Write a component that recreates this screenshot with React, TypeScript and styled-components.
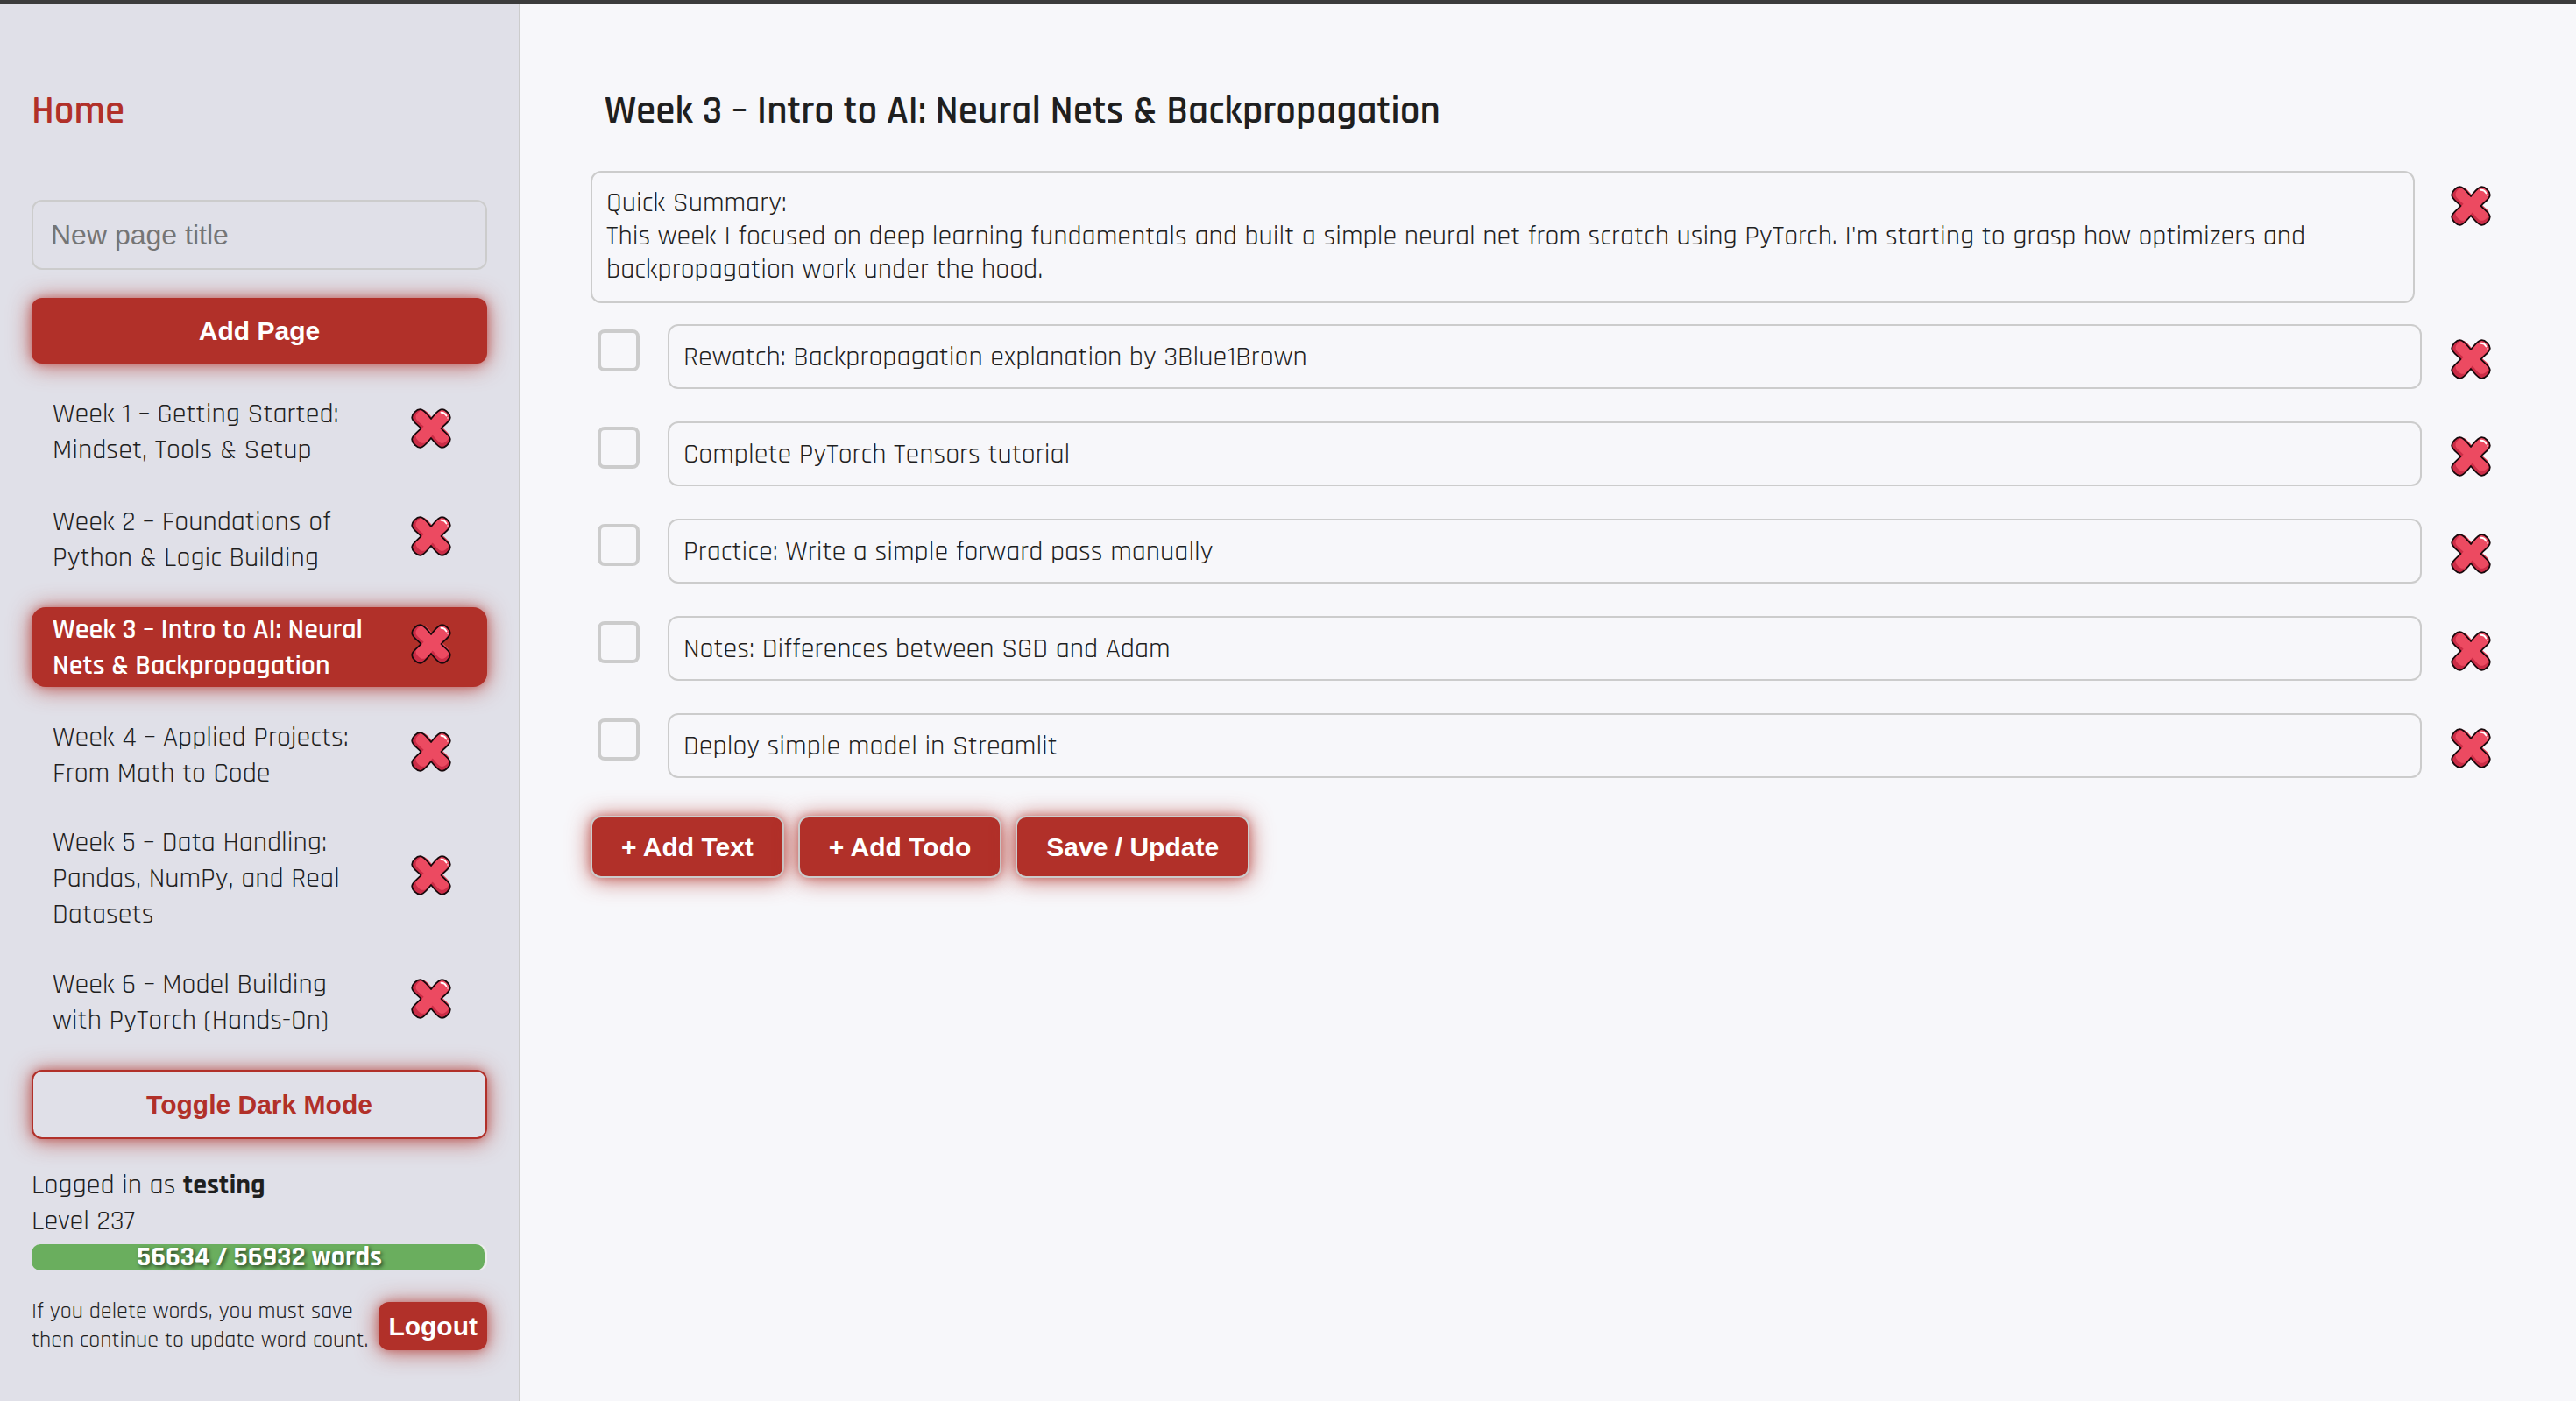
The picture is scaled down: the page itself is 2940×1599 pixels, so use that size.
import React, { useState } from "react";
import styled, { createGlobalStyle, css } from "styled-components";

const color = {
  red: "#b13029",
  text: "#1f1f1f",
  border: "#cccccc",
  side: "#e0e0e8",
  page: "#f7f7fa",
  green: "#6aae5e",
};

const glow = "0 0 10px rgba(178, 48, 40, 0.4), 0 2px 26px rgba(178, 48, 40, 0.75)";
const uiFont = `"Liberation Sans", Arial, sans-serif`;

const GlobalStyle = createGlobalStyle`
  *, *::before, *::after { box-sizing: border-box; }
  body {
    margin: 0;
    background: ${color.page};
    color: ${color.text};
    font-family: Rajdhani, "Roboto Condensed", Roboto, sans-serif;
    font-size: 32px;
    line-height: 41px;
  }
`;

const Shell = styled.div`
  display: grid;
  grid-template-columns: 594px minmax(0, 1fr);
  min-height: 100vh;
  border-top: 5px solid #3c3c3c;
`;

const Sidebar = styled.aside`
  display: flex;
  flex-direction: column;
  gap: 32px;
  padding: 94px 36px 32px;
  background: ${color.side};
  border-right: 2px solid ${color.border};
`;

const HomeLink = styled.a`
  margin-bottom: 40px;
  color: ${color.red};
  font-size: 45px;
  font-weight: 600;
  line-height: 57px;
  text-decoration: none;
`;

const NewPageForm = styled.form`
  display: flex;
  flex-direction: column;
  gap: 32px;
`;

const TitleInput = styled.input`
  width: 100%;
  height: 80px;
  padding: 20px;
  border: 2px solid ${color.border};
  border-radius: 12px;
  background: transparent;
  color: ${color.text};
  font-family: ${uiFont};
  font-size: 32px;
  line-height: 37px;

  &::placeholder { color: #757575; }
`;

const Button = styled.button<{ $variant?: "block" | "outline" | "tool" | "compact" }>`
  border: 0;
  border-radius: 12px;
  background: ${color.red};
  color: #fff;
  box-shadow: ${glow};
  font-family: ${uiFont};
  font-size: 30px;
  font-weight: 700;
  line-height: 35px;
  white-space: nowrap;
  cursor: pointer;

  ${({ $variant }) =>
    $variant === "tool"
      ? css`
          padding: 16px 33px;
          border: 2px solid ${color.border};
        `
      : $variant === "compact"
        ? css`
            padding: 10px 11px;
          `
        : css`
            padding: 20px;
          `}

  ${({ $variant }) =>
    $variant === "outline" &&
    css`
      border: 2px solid ${color.red};
      background: ${color.side};
      color: ${color.red};
    `}
`;

const PageList = styled.ul`
  display: flex;
  flex-direction: column;
  gap: 32px;
  margin: 0;
  padding: 0;
  list-style: none;
`;

const PageItem = styled.li<{ $active: boolean }>`
  display: flex;
  align-items: center;
  gap: 24px;
  padding: 2px 24px;
  border-radius: 16px;
  cursor: pointer;

  ${({ $active }) =>
    $active &&
    css`
      background: ${color.red};
      color: #fff;
      box-shadow: ${glow};
      font-weight: 600;
    `}
`;

const PageName = styled.a`
  flex: 1;
  color: inherit;
  text-decoration: none;
`;

const IconButton = styled.button`
  display: flex;
  flex: none;
  align-items: center;
  justify-content: center;
  width: 80px;
  height: 87px;
  padding: 0 0 7px;
  border: 0;
  background: none;
  cursor: pointer;
`;

const Account = styled.section`
  display: flex;
  flex-direction: column;
`;

const Progress = styled.div`
  display: grid;
  height: 30px;
  margin: 6px 0 30px;
  border-radius: 10px;
  background: #eeeeee;
`;

const ProgressFill = styled.div`
  grid-area: 1 / 1;
  border-radius: 10px;
  background: ${color.green};
`;

const ProgressText = styled.span`
  grid-area: 1 / 1;
  place-self: center;
  color: #fff;
  font-weight: 700;
  line-height: 30px;
  text-shadow: 2px 2px 4px rgba(0, 0, 0, 0.6);
`;

const AccountFooter = styled.div`
  display: flex;
  align-items: center;
  justify-content: space-between;
`;

const Hint = styled.p`
  flex: 1;
  margin: 0;
  font-size: 26px;
  line-height: 33px;
`;

const Main = styled.main`
  padding: 94px 80px 32px;
`;

const PageTitle = styled.h1`
  margin: 0 0 39px;
  padding: 0 16px;
  font-size: 45px;
  font-weight: 600;
  line-height: 57px;
`;

const Blocks = styled.div`
  display: flex;
  flex-direction: column;
  gap: 24px;
`;

const BlockRow = styled.div<{ $gap: number }>`
  display: flex;
  align-items: flex-start;
  gap: ${({ $gap }) => $gap}px;
`;

const fieldStyle = css`
  flex: 1;
  min-width: 0;
  padding: 16px;
  border: 2px solid ${color.border};
  border-radius: 12px;
  background: transparent;
  color: ${color.text};
  font: inherit;
  line-height: 38px;
`;

const TextBlock = styled.textarea`
  ${fieldStyle}
  display: block;
  height: 151px;
  resize: none;
  overflow: hidden;
`;

const TodoText = styled.input`
  ${fieldStyle}
  height: 74px;
`;

const Check = styled.input`
  appearance: none;
  flex: none;
  width: 48px;
  height: 48px;
  margin: 6px 16px 0 8px;
  border: 4px solid ${color.border};
  border-radius: 8px;
  cursor: pointer;

  &:checked { background: ${color.red}; border-color: ${color.red}; }
`;

const Toolbar = styled.div`
  display: flex;
  gap: 16px;
  margin-top: 30px;
`;

const CROSS =
  "M23 12 C27 7.5 31 1.2 35.5 1.2 C39.5 1.2 44.8 6.5 44.8 10.5 C44.8 15 39 18 34.5 23 C39 28 44.8 31 44.8 35.5 C44.8 39.5 39.5 44.8 35.5 44.8 C31 44.8 27 38.5 23 34 C19 38.5 15 44.8 10.5 44.8 C6.5 44.8 1.2 39.5 1.2 35.5 C1.2 31 7 28 11.5 23 C7 18 1.2 15 1.2 10.5 C1.2 6.5 6.5 1.2 10.5 1.2 C15 1.2 19 7.5 23 12 Z";

function CrossIcon() {
  return (
    <svg width="46" height="46" viewBox="0 0 46 46" aria-hidden="true">
      <path d={CROSS} fill="#cb2c46" />
      <path d={CROSS} fill="#ec4a61" transform="translate(4.5 0.8) scale(0.88 0.87)" />
      <path d={CROSS} fill="none" stroke="#17090c" strokeWidth="1.8" strokeLinejoin="round" />
      <path d="M34.5 4.8 C37.2 4.6 39.2 6.2 40.4 8.4" fill="none" stroke="#fff" strokeWidth="1.9" strokeLinecap="round" />
      <circle cx="42" cy="11" r="0.9" fill="#f6b4bf" />
    </svg>
  );
}

const PAGES = [
  "Week 1 – Getting Started: Mindset, Tools & Setup",
  "Week 2 – Foundations of Python & Logic Building",
  "Week 3 – Intro to AI: Neural Nets & Backpropagation",
  "Week 4 – Applied Projects: From Math to Code",
  "Week 5 – Data Handling: Pandas, NumPy, and Real Datasets",
  "Week 6 – Model Building with PyTorch (Hands-On)",
];

const SUMMARY =
  "Quick Summary:\nThis week I focused on deep learning fundamentals and built a simple neural net from scratch using PyTorch. I'm starting to grasp how optimizers and backpropagation work under the hood.";

const TODOS = [
  "Rewatch: Backpropagation explanation by 3Blue1Brown",
  "Complete PyTorch Tensors tutorial",
  "Practice: Write a simple forward pass manually",
  "Notes: Differences between SGD and Adam",
  "Deploy simple model in Streamlit",
];

const WORDS = 56634;
const NEXT_LEVEL = 56932;

export default function App() {
  const [active, setActive] = useState(2);

  return (
    <>
      <GlobalStyle />
      <Shell>
        <Sidebar>
          <HomeLink href="#home">Home</HomeLink>
          <NewPageForm onSubmit={(e) => e.preventDefault()}>
            <TitleInput type="text" placeholder="New page title" aria-label="New page title" />
            <Button type="submit">Add Page</Button>
          </NewPageForm>
          <PageList>
            {PAGES.map((name, i) => (
              <PageItem key={name} $active={i === active} onClick={() => setActive(i)}>
                <PageName href={`#week-${i + 1}`}>{name}</PageName>
                <IconButton type="button" aria-label={`Delete ${name}`}>
                  <CrossIcon />
                </IconButton>
              </PageItem>
            ))}
          </PageList>
          <Button type="button" $variant="outline">Toggle Dark Mode</Button>
          <Account>
            <div>Logged in as <strong>testing</strong></div>
            <div>Level 237</div>
            <Progress role="progressbar" aria-label="Words" aria-valuenow={WORDS} aria-valuemax={NEXT_LEVEL}>
              <ProgressFill style={{ width: `${(WORDS / NEXT_LEVEL) * 100}%` }} />
              <ProgressText>{WORDS} / {NEXT_LEVEL} words</ProgressText>
            </Progress>
            <AccountFooter>
              <Hint>If you delete words, you must save then continue to update word count.</Hint>
              <Button type="button" $variant="compact">Logout</Button>
            </AccountFooter>
          </Account>
        </Sidebar>
        <Main>
          <PageTitle>{PAGES[active]}</PageTitle>
          <Blocks>
            <BlockRow $gap={24}>
              <TextBlock aria-label="Text block" defaultValue={SUMMARY} spellCheck={false} />
              <IconButton type="button" aria-label="Delete text block">
                <CrossIcon />
              </IconButton>
            </BlockRow>
            {TODOS.map((todo) => (
              <BlockRow key={todo} $gap={16}>
                <Check type="checkbox" aria-label={`Done: ${todo}`} />
                <TodoText type="text" aria-label="Todo" defaultValue={todo} spellCheck={false} />
                <IconButton type="button" aria-label={`Delete ${todo}`}>
                  <CrossIcon />
                </IconButton>
              </BlockRow>
            ))}
          </Blocks>
          <Toolbar>
            <Button type="button" $variant="tool">+ Add Text</Button>
            <Button type="button" $variant="tool">+ Add Todo</Button>
            <Button type="button" $variant="tool">Save / Update</Button>
          </Toolbar>
        </Main>
      </Shell>
    </>
  );
}
